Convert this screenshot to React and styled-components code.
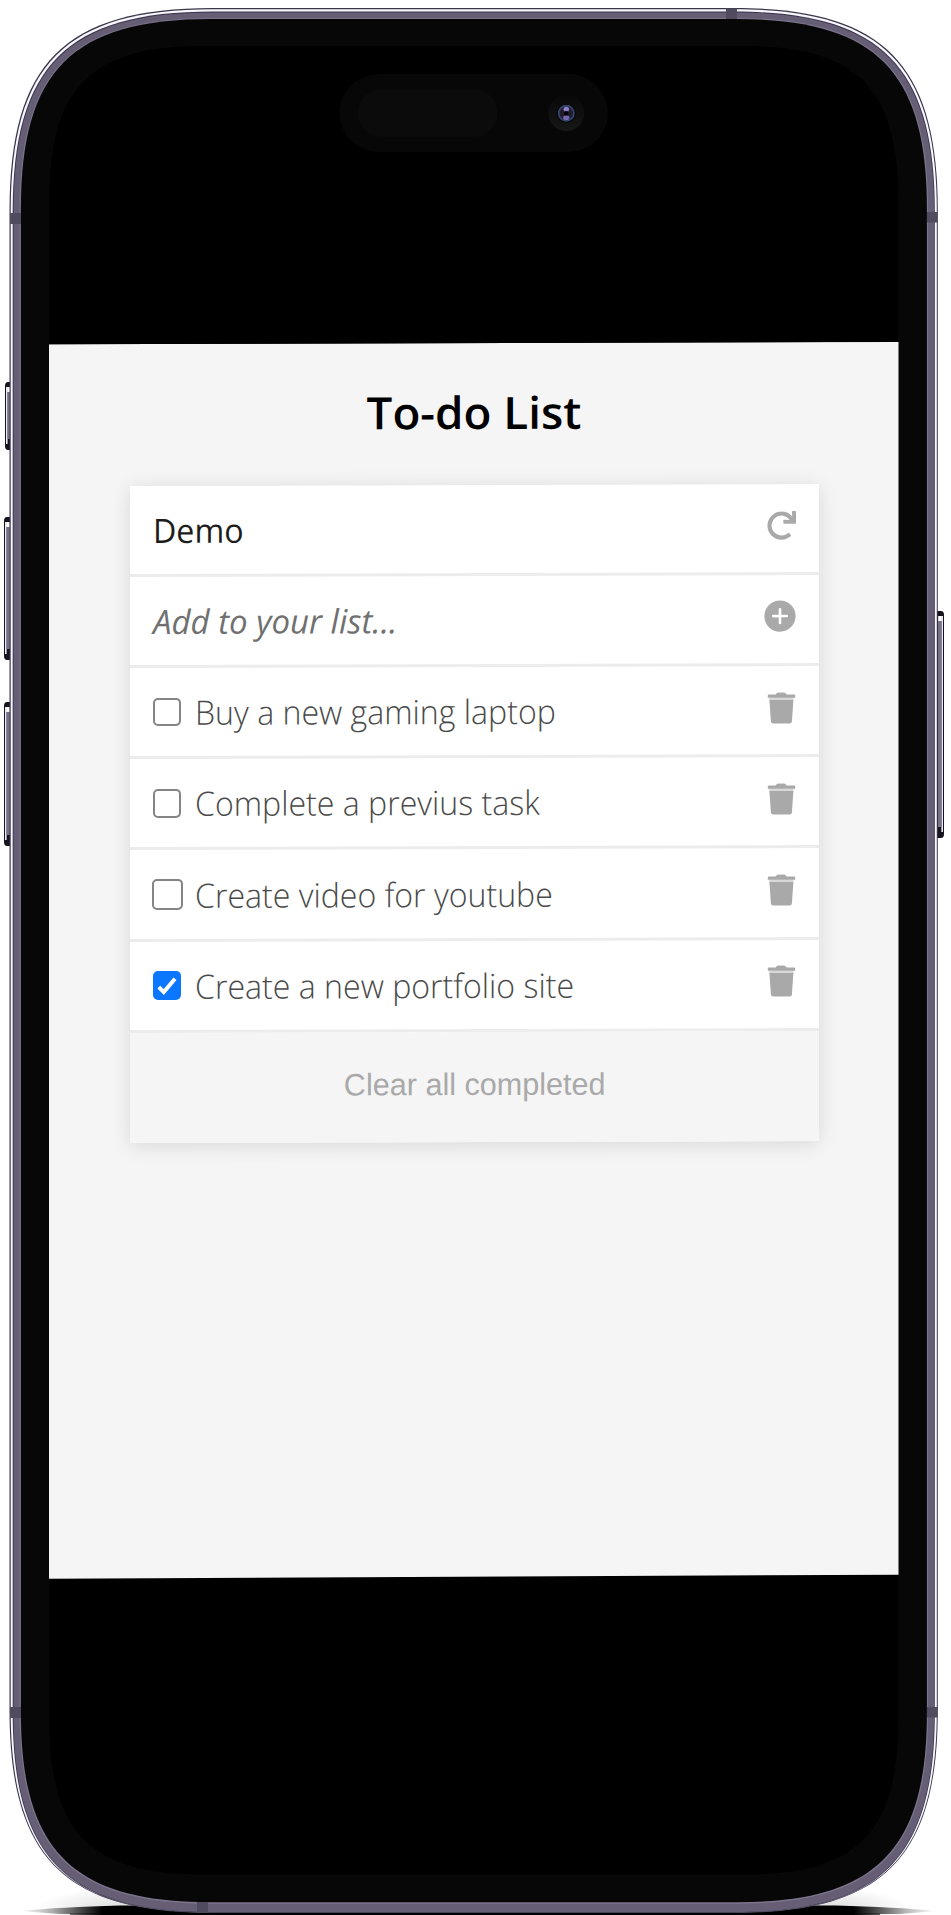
import React, { useState } from "react";
import styled, { createGlobalStyle } from "styled-components";
import { FaRedo } from "react-icons/fa";

const GlobalStyle = createGlobalStyle`
  *, *::before, *::after { box-sizing: border-box; }
  body { margin: 0; background: #fff; }
`;

const Stage = styled.main`
  position: relative;
  width: 951px;
  height: 1915px;
  overflow: hidden;
  padding: 341px 0 0 49px;
  font-family: "Open Sans", "Noto Sans", sans-serif;
`;

const DeviceArt = styled.svg`
  position: absolute;
  inset: 0;
  display: block;
`;

const Display = styled.section`
  position: relative;
  width: 849.5px;
  height: 1238px;
  padding: 40px 80px 0 81px;
  background: #f5f5f5;
  transform: skewY(-0.17deg);
  clip-path: polygon(0 2px, 100% 2.2px, 100% 1235px, 0 1236.4px);
`;

const Title = styled.h1`
  margin: 0;
  height: 103.7px;
  line-height: 61px;
  text-align: center;
  font-size: 44.5px;
  font-weight: 600;
  color: #000;
`;

const TitleText = styled.span`
  display: inline-block;
  transform: translateX(-0.5px) scaleX(${(p) => p.$stretch});
`;

const Card = styled.div`
  background: #fff;
  box-shadow: 0 3px 20px rgba(0, 0, 0, 0.12);
`;

const Row = styled.div`
  display: flex;
  align-items: center;
  height: 91.2px;
  padding: 0 22.5px 0 22.5px;
  border-bottom: 3px solid #ececec;
`;

const Label = styled.span`
  flex: 1;
  white-space: nowrap;
  font-size: 33.5px;
  line-height: 46px;
  font-weight: ${(p) => p.$weight};
  font-style: ${(p) => (p.$italic ? "italic" : "normal")};
  color: ${(p) => p.$color};
  transform: scaleX(${(p) => p.$stretch});
  transform-origin: 0 50%;
`;

const Check = styled.button`
  flex: none;
  display: flex;
  align-items: center;
  justify-content: center;
  width: ${(p) => (p.$large ? 31 : 28.5)}px;
  height: ${(p) => (p.$large ? 31 : 28.5)}px;
  margin: 0 ${(p) => (p.$large ? 12.5 : 13.5)}px 0 ${(p) => (p.$large ? -1 : 0)}px;
  padding: 0;
  border: 2.4px solid ${(p) => (p.$on ? "#0b76ff" : "#858585")};
  border-radius: 5px;
  background: ${(p) => (p.$on ? "#0b76ff" : "#fff")};
`;

const IconButton = styled.button`
  flex: none;
  display: flex;
  justify-content: flex-end;
  width: 34px;
  margin-bottom: 5px;
  padding: 0;
  border: 0;
  background: none;
  color: #a9a9a9;
`;

const Footer = styled.div`
  display: flex;
  align-items: center;
  justify-content: center;
  height: 110.5px;
  padding-bottom: 4px;
  background: #f5f5f5;
`;

const ClearButton = styled.button`
  padding: 0;
  border: 0;
  background: none;
  white-space: nowrap;
  font-family: "Liberation Sans", Arial, sans-serif;
  font-size: 31px;
  color: #a9a9a9;
  transform: scaleX(${(p) => p.$stretch});
`;

const TrashIcon = () => (
  <svg width="29" height="32" viewBox="0 0 29 32" fill="currentColor">
    <path d="M0.8 3.4Q0.8 2.4 1.8 2.4H8.6L9.6 1.1Q10.2 0.4 11.2 0.4H17Q18 0.4 18.6 1.1L19.6 2.4H27.2Q28.2 2.4 28.2 3.4V5.6H0.8Z" />
    <path d="M2.4 8H26.4L24.9 29.4Q24.7 31.4 22.7 31.4H6.1Q4.1 31.4 3.9 29.4Z" />
    <path d="M2.4 5.5H26.6V8.1H2.4Z" opacity="0.45" />
  </svg>
);

const PlusIcon = () => (
  <svg width="32" height="32" viewBox="0 0 32 32">
    <circle cx="16" cy="16" r="15.6" fill="currentColor" />
    <path d="M16 9.2V22.8M9.2 16H22.8" stroke="#fff" strokeWidth="2.6" strokeLinecap="round" />
  </svg>
);

const TickIcon = () => (
  <svg width="24" height="24" viewBox="0 0 24 24" fill="none">
    <path d="M3.8 13.2L8.8 18.2L20 4.8" stroke="#fff" strokeWidth="4" />
  </svg>
);

// Rounded body outline with continuous-curvature corners.
const body = (x0, y0, x1, y1, r) => {
  const k = r * 0.271;
  return `M${x0} ${y0 + r}C${x0} ${y0 + k} ${x0 + k} ${y0} ${x0 + r} ${y0}H${x1 - r}C${x1 - k} ${y0} ${x1} ${y0 + k} ${x1} ${y0 + r}V${y1 - r}C${x1} ${y1 - k} ${x1 - k} ${y1} ${x1 - r} ${y1}H${x0 + r}C${x0 + k} ${y1} ${x0} ${y1 - k} ${x0} ${y1 - r}Z`;
};

const SideKey = ({ x, y, height, right }) => (
  <g transform={right ? `translate(${x + 6.5} ${y}) scale(-1 1)` : `translate(${x} ${y})`}>
    <path d={`M7 0H3Q0 0 0 4V${height - 4}Q0 ${height} 3 ${height}H7Z`} fill="#17141f" />
    <rect x="1" y="5" width="1.6" height={height - 11} fill="#eeebf8" />
    <rect x="2.6" y="9" width="3.4" height={height - 20} fill="#777087" />
    <rect x="2.2" y="5" width="3.6" height="5" fill="#fff" />
  </g>
);

const bands = [
  [10, 213, 11, 11],
  [10, 1707, 11, 11],
  [927, 212, 10.5, 10.5],
  [927, 1707, 10.5, 10.5],
  [726, 8.5, 11, 10.5],
  [197, 1902, 11, 11],
];

const Device = () => (
  <DeviceArt width="951" height="1915" viewBox="0 0 951 1915" aria-hidden="true">
    <defs>
      <linearGradient id="floor" x1="20" x2="936" y1="0" y2="0" gradientUnits="userSpaceOnUse">
        <stop offset="0" stopColor="#000" stopOpacity="0" />
        <stop offset="0.035" stopColor="#000" stopOpacity="0.3" />
        <stop offset="0.09" stopColor="#000" />
        <stop offset="0.91" stopColor="#000" />
        <stop offset="0.965" stopColor="#000" stopOpacity="0.3" />
        <stop offset="1" stopColor="#000" stopOpacity="0" />
      </linearGradient>
      <linearGradient id="shine" x1="0" x2="0" y1="1860" y2="1906" gradientUnits="userSpaceOnUse">
        <stop offset="0" stopColor="#f8f6ff" />
        <stop offset="1" stopColor="#746c85" />
      </linearGradient>
      <radialGradient id="haze">
        <stop offset="0" stopColor="#000" stopOpacity="0.14" />
        <stop offset="1" stopColor="#000" stopOpacity="0" />
      </radialGradient>
      <linearGradient id="lens" x1="0" x2="0" y1="0" y2="1">
        <stop offset="0" stopColor="#080808" />
        <stop offset="1" stopColor="#171717" />
      </linearGradient>
    </defs>
    <ellipse cx="122" cy="1908" rx="85" ry="20" fill="url(#haze)" />
    <ellipse cx="826" cy="1908" rx="85" ry="20" fill="url(#haze)" />
    <path d="M20 1911Q60 1907 120 1905.5H836Q896 1907 936 1911L900 1914H60Z" fill="url(#floor)" />
    <rect x="70" y="1913.5" width="810" height="1.5" fill="url(#floor)" />

    <SideKey x={5} y={382} height={68} />
    <SideKey x={4} y={517} height={143} />
    <SideKey x={4} y={702} height={144} />
    <SideKey x={937.5} y={611} height={227} right />

    <path d={body(9.5, 8, 937.8, 1913, 203)} fill="#3a3649" />
    <path d={body(10.7, 9.2, 936.8, 1912.6, 202)} fill="url(#shine)" />
    <path d={body(12.7, 11.6, 934.8, 1912.4, 200)} fill="#39334b" />
    <path d={body(13.6, 12.5, 934, 1912, 199)} fill="#655e75" />
    <path d={body(19.6, 17.9, 928.2, 1903.8, 192)} fill="#7b748c" />
    <path d={body(20.9, 19.1, 926.9, 1902.2, 190)} fill="#070707" />
    <path d={body(49.3, 46, 898.2, 1874.6, 154)} fill="#000" />
    {bands.map(([x, y, w, h]) => (
      <rect key={`${x}-${y}`} x={x} y={y} width={w} height={h} fill="#514b5f" />
    ))}

    <rect x="339.5" y="74" width="268.5" height="78" rx="39" fill="#070707" />
    <rect x="358" y="89" width="139.5" height="48" rx="24" fill="#0b0b0b" />
    <circle cx="566.3" cy="113" r="18" fill="url(#lens)" />
    <circle cx="566.3" cy="113.3" r="9.5" fill="#030306" />
    <circle cx="566.3" cy="113.3" r="7.6" fill="#211c2b" stroke="#35466c" strokeWidth="1.8" />
    <ellipse cx="566.3" cy="109.2" rx="2.8" ry="2.5" fill="#8c80c9" />
    <ellipse cx="566.3" cy="117.8" rx="3.2" ry="2.3" fill="#7468b0" />
    <circle cx="566.3" cy="113.3" r="2.2" fill="#050309" />
  </DeviceArt>
);

const initialTasks = [
  { text: "Buy a new gaming laptop", done: false },
  { text: "Complete a previus task", done: false },
  { text: "Create video for youtube", done: false, large: true },
  { text: "Create a new portfolio site", done: true },
];

export default function App() {
  const [tasks, setTasks] = useState(initialTasks);
  const toggle = (i) => setTasks(tasks.map((t, n) => (n === i ? { ...t, done: !t.done } : t)));

  return (
    <>
      <GlobalStyle />
      <Stage>
        <Device />
        <Display>
          <Title>
            <TitleText $stretch={1.028}>To-do List</TitleText>
          </Title>
          <Card>
            <Row>
              <Label $weight={400} $color="#1c1c1c" $stretch={0.961}>Demo</Label>
              <IconButton aria-label="Refresh">
                <FaRedo size={29} />
              </IconButton>
            </Row>
            <Row>
              <Label $weight={400} $italic $color="#707070" $stretch={0.985}>Add to your list...</Label>
              <IconButton aria-label="Add">
                <PlusIcon />
              </IconButton>
            </Row>
            {tasks.map((task, i) => (
              <Row key={task.text}>
                <Check $on={task.done} $large={task.large} aria-label={task.text} onClick={() => toggle(i)}>
                  {task.done && <TickIcon />}
                </Check>
                <Label $weight={300} $color="#4a4a4a" $stretch={0.958}>{task.text}</Label>
                <IconButton aria-label="Delete">
                  <TrashIcon />
                </IconButton>
              </Row>
            ))}
            <Footer>
              <ClearButton $stretch={0.986} onClick={() => setTasks(tasks.filter((t) => !t.done))}>
                Clear all completed
              </ClearButton>
            </Footer>
          </Card>
        </Display>
      </Stage>
    </>
  );
}
